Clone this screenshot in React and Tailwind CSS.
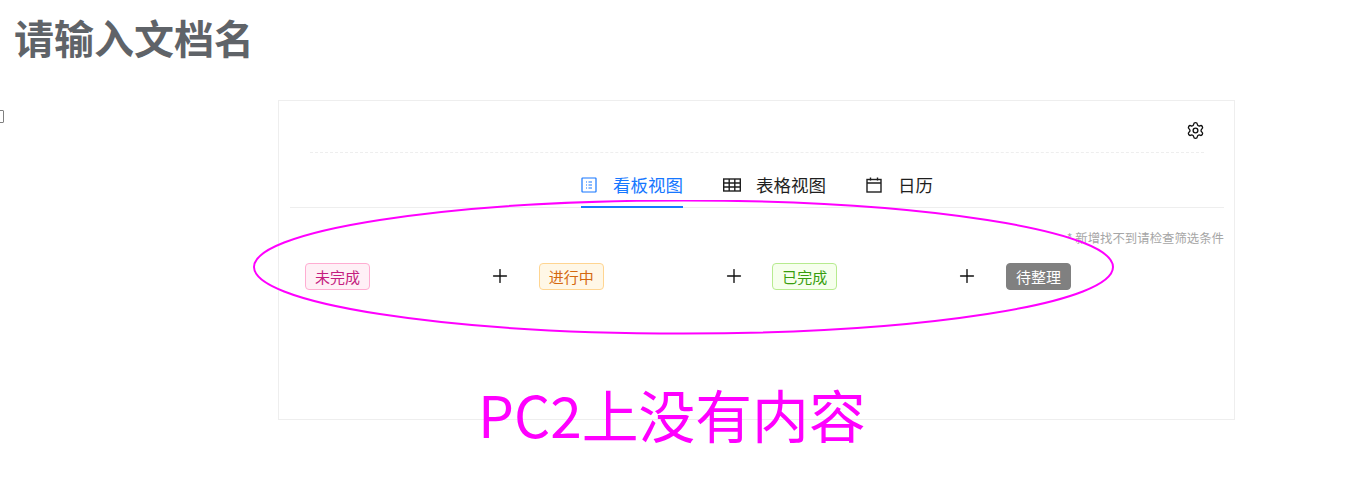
import { Settings, Plus } from "lucide-react";

const columns = [
  { name: "未完成", tag: "border-[#ffadd2] bg-[#fff0f6] text-[#c41d7f]" },
  { name: "进行中", tag: "border-[#ffd591] bg-[#fff7e6] text-[#d4680f]" },
  { name: "已完成", tag: "border-[#b7eb8f] bg-[#f6ffed] text-[#389e0d]" },
  { name: "待整理", tag: "border-[#808080] bg-[#808080] text-white", last: true },
];

function BoardIcon() {
  return (
    <svg width="16" height="16" viewBox="0 0 16 16" fill="none" stroke="currentColor" strokeWidth="1.2">
      <rect x="1" y="1" width="14" height="14" rx="0.5" />
      <path d="M5 5h1M5 8h1M5 11h1M7.5 5h3.5M7.5 8h3.5M7.5 11h3.5" />
    </svg>
  );
}

function TableIcon() {
  return (
    <svg width="18" height="14" viewBox="0 0 18 14" fill="none" stroke="currentColor" strokeWidth="1.4">
      <rect x="0.7" y="1" width="16.6" height="12" />
      <path d="M0.7 5h16.6M0.7 9h16.6M6.2 1v12M11.8 1v12" />
    </svg>
  );
}

function CalendarIcon() {
  return (
    <svg width="16" height="16" viewBox="0 0 16 16" fill="none" stroke="currentColor" strokeWidth="1.4">
      <rect x="1" y="2.5" width="14" height="12.5" />
      <path d="M1 6h14M4.5 0.5v3M11.5 0.5v3" />
    </svg>
  );
}

export default function App() {
  return (
    <div className="relative h-[494px] w-[1349px] overflow-hidden bg-white font-['Noto_Sans_CJK_SC','Noto_Sans',sans-serif]">
      <h1 className="pl-[14px] pt-[8px] pb-[3px] text-[40px] leading-[58px] font-bold text-[#5f6368]">请输入文档名</h1>

      <div className="flex mt-[31px]">
        <div className="w-[278px] shrink-0 pt-[10px]">
          <div className="h-[13px] w-[5px] border-[1.5px] border-[#808080] rounded-[1px] -ml-px" />
        </div>

        <div className="h-[320px] w-[957px] border border-[#eeeeee] pl-[11px] pr-[10px]">
          <div className="mx-[20px] flex h-[52px] items-start justify-end border-b border-dashed border-[#eeeeee] pt-[20px]">
            <Settings size={19} strokeWidth={1.7} className="-mr-px text-[#111]" />
          </div>

          <div className="flex h-[55px] justify-center gap-10 border-b border-[#eeeeee]">
            <div className="flex h-[55px] items-center gap-4 border-b-2 border-[#1677ff] pt-[11px] text-[17.5px] text-[#1677ff]">
              <BoardIcon />
              <span>看板视图</span>
            </div>
            <div className="flex h-[55px] items-center gap-[15px] pt-[9px] text-[17.5px] text-[#1f1f1f]">
              <TableIcon />
              <span>表格视图</span>
            </div>
            <div className="flex h-[55px] items-center gap-[16px] pt-[9px] text-[17.5px] text-[#1f1f1f]">
              <CalendarIcon />
              <span>日历</span>
            </div>
          </div>

          <p className="mt-[21px] text-right text-[12.4px] leading-[18px] text-[#a6a6a6]">* 新增找不到请检查筛选条件</p>

          <div className="mt-[16px] flex pl-[15px]">
            {columns.map((c) => (
              <div key={c.name} className="flex w-[233.67px] shrink-0 items-center">
                <span className={`flex h-[27px] w-[65px] items-center justify-center rounded border pt-px text-[15px] ${c.tag}`}>
                  {c.name}
                </span>
                {!c.last && <Plus size={22} strokeWidth={1.5} className="-mt-px ml-[119px] text-[#111]" />}
              </div>
            ))}
          </div>
        </div>
      </div>

      {/* hand-drawn annotation over the screenshot */}
      <svg className="absolute left-[253px] top-[200px]" width="862" height="135" viewBox="0 0 862 135" fill="none">
        <ellipse cx="430.5" cy="67" rx="429.5" ry="66.5" stroke="#ff00ff" strokeWidth="2" />
      </svg>
      <div className="absolute left-[478px] top-[372px] text-[56.8px] leading-[82px] text-[#ff00ff] whitespace-nowrap">PC2上没有内容</div>
    </div>
  );
}
